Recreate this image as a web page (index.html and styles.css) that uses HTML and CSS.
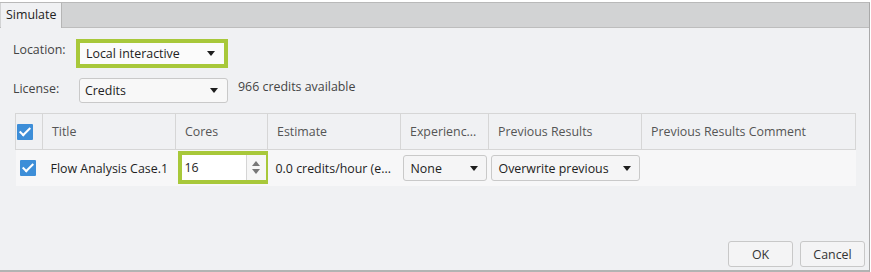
FILE: index.html
```html
<!DOCTYPE html>
<html lang="en">

<head>
  <meta charset="UTF-8">
  <link rel="stylesheet" href="styles.css">
</head>

<body>
  <div class="window">
    <div class="tab-bar">
      <div class="tab">Simulate</div>
    </div>

    <div class="panel">
      <div class="form">
        <div class="form-label">Location:</div>
        <div class="highlight">
          <div class="dropdown dropdown-plain">
            <span>Local interactive</span>
            <span class="arrow"></span>
          </div>
        </div>

        <div class="form-label">License:</div>
        <div class="license-line">
          <div class="dropdown license-dropdown">
            <span>Credits</span>
            <span class="arrow"></span>
          </div>
          <span class="credits">966 credits available</span>
        </div>
      </div>

      <table class="grid">
        <colgroup>
          <col style="width: 27px">
          <col style="width: 133px">
          <col style="width: 92px">
          <col style="width: 133px">
          <col style="width: 88px">
          <col style="width: 153px">
          <col style="width: 214px">
        </colgroup>
        <thead>
          <tr>
            <th class="check-col"><span class="checkbox head-check"></span></th>
            <th>Title</th>
            <th>Cores</th>
            <th>Estimate</th>
            <th>Experienc...</th>
            <th>Previous Results</th>
            <th>Previous Results Comment</th>
          </tr>
        </thead>
        <tbody>
          <tr>
            <td class="check-col"><span class="checkbox row-check"></span></td>
            <td class="title-cell">Flow Analysis Case.1</td>
            <td class="cores-cell">
              <div class="highlight cores-box">
                <div class="spin-input">
                  <span class="spin-value">16</span>
                  <span class="spinner">
                    <span class="spin-up"></span>
                    <span class="spin-down"></span>
                  </span>
                </div>
              </div>
            </td>
            <td class="estimate-cell">0.0 credits/hour (e...</td>
            <td class="select-cell">
              <div class="dropdown cell-dropdown">
                <span>None</span>
                <span class="arrow"></span>
              </div>
            </td>
            <td class="select-cell">
              <div class="dropdown cell-dropdown">
                <span>Overwrite previous</span>
                <span class="arrow"></span>
              </div>
            </td>
            <td></td>
          </tr>
        </tbody>
      </table>

      <div class="buttons">
        <button class="dialog-button">OK</button>
        <button class="dialog-button">Cancel</button>
      </div>
    </div>
  </div>
</body>

</html>
```

FILE: styles.css
```css
body {
  margin: 0;
  background-color: #ffffff;
  font-family: "Open Sans", "Noto Sans", sans-serif;
  font-size: 12.4px;
  color: #333;
}

.window {
  margin-top: 2px;
  width: 870px;
  height: 270px;
  border-top: 1px solid #b9b9b9;
  border-right: 1px solid #a9a9a9;
  border-bottom: 2px solid #b3b3b3;
  box-sizing: border-box;
  display: flex;
  flex-direction: column;
  background-color: #f0f1f3;
}

.tab-bar {
  height: 24px;
  background-color: #d2d3d4;
  border-bottom: 1px solid #bdbdbd;
  display: flex;
}

.tab {
  width: 61px;
  margin-left: 1px;
  margin-bottom: -1px;
  padding-left: 5px;
  box-sizing: border-box;
  background-color: #f0f1f3;
  border-right: 1px solid #b5b5b5;
  line-height: 24px;
  font-size: 12.4px;
  color: #222;
}

.panel {
  flex: 1;
  padding: 11px 4px 3px 15px;
  display: flex;
  flex-direction: column;
}

.form {
  display: grid;
  grid-template-columns: 62px auto;
  row-gap: 10px;
  align-items: center;
  margin-left: -2px;
}

.form-label {
  color: #444;
  align-self: start;
  padding-top: 2px;
}

.highlight {
  border: 4px solid #a8c83a;
  box-sizing: border-box;
}

.form .highlight {
  width: 152px;
  height: 29px;
  margin-left: 1px;
}

.dropdown {
  display: flex;
  align-items: center;
  justify-content: space-between;
  box-sizing: border-box;
  padding: 0 9px 0 6px;
  color: #222;
}

.dropdown-plain {
  height: 21px;
  background-color: #fbfbfb;
}

.license-line {
  display: flex;
  align-items: center;
  gap: 10px;
  margin-left: 4px;
}

.license-dropdown {
  width: 149px;
  height: 25px;
  background-color: #f8f8f8;
  border: 1px solid #c9c9c9;
  border-radius: 3px;
  padding-left: 5px;
  padding-right: 9px;
}

.credits {
  color: #444;
  margin-top: -9px;
}

.arrow {
  width: 0;
  height: 0;
  border-left: 4px solid transparent;
  border-right: 4px solid transparent;
  border-top: 5px solid #1e1e1e;
}

.grid {
  margin-top: 10px;
  width: 840px;
  border-collapse: collapse;
  table-layout: fixed;
}

.grid th {
  height: 36px;
  padding: 0 0 0 9px;
  text-align: left;
  font-weight: normal;
  color: #555;
  border: 1px solid #d6d6d6;
  box-sizing: border-box;
  white-space: nowrap;
  overflow: hidden;
}

.grid th.check-col {
  padding: 0;
}

.grid td {
  height: 36px;
  padding: 0;
  background-color: #f7f7f8;
  white-space: nowrap;
}

.checkbox {
  display: block;
  width: 16px;
  height: 16px;
  background-color: #3d8ed8;
  border-radius: 1px;
  position: relative;
}

.checkbox::after {
  content: "";
  position: absolute;
  left: 5px;
  top: 1px;
  width: 4px;
  height: 9px;
  border-right: 2px solid #fff;
  border-bottom: 2px solid #fff;
  transform: rotate(45deg);
}

.head-check {
  margin-left: 1px;
}

.row-check {
  margin-left: 4px;
}

.title-cell {
  padding-left: 8px !important;
  color: #1e1e1e;
}

.cores-box {
  width: 92px;
  height: 33px;
  margin-left: 2px;
  margin-top: -2px;
}

.spin-input {
  height: 25px;
  background-color: #fff;
  display: flex;
  align-items: center;
  justify-content: space-between;
  padding-left: 3px;
  color: #1e1e1e;
}

.spinner {
  width: 19px;
  height: 100%;
  border-left: 1px solid #d5d5d5;
  background-color: #f6f6f6;
  display: flex;
  flex-direction: column;
  align-items: center;
  justify-content: center;
  gap: 3px;
}

.spin-up {
  border-left: 4px solid transparent;
  border-right: 4px solid transparent;
  border-bottom: 5px solid #777;
}

.spin-down {
  border-left: 4px solid transparent;
  border-right: 4px solid transparent;
  border-top: 5px solid #777;
}

.estimate-cell {
  padding-left: 8px !important;
  color: #1e1e1e;
}

.select-cell {
  padding-left: 2px !important;
}

.cell-dropdown {
  width: calc(100% - 2px);
  height: 26px;
  background-color: #f5f5f6;
  border: 1px solid #c9c9c9;
  border-radius: 3px;
  padding-left: 7px;
  padding-right: 8px;
}

.buttons {
  margin-top: auto;
  display: flex;
  justify-content: flex-end;
  gap: 7px;
}

.dialog-button {
  width: 65px;
  height: 26px;
  font-family: inherit;
  font-size: 12.4px;
  color: #333;
  background-color: #f4f4f5;
  border: 1px solid #c8c8c8;
  border-radius: 3px;
}
```
